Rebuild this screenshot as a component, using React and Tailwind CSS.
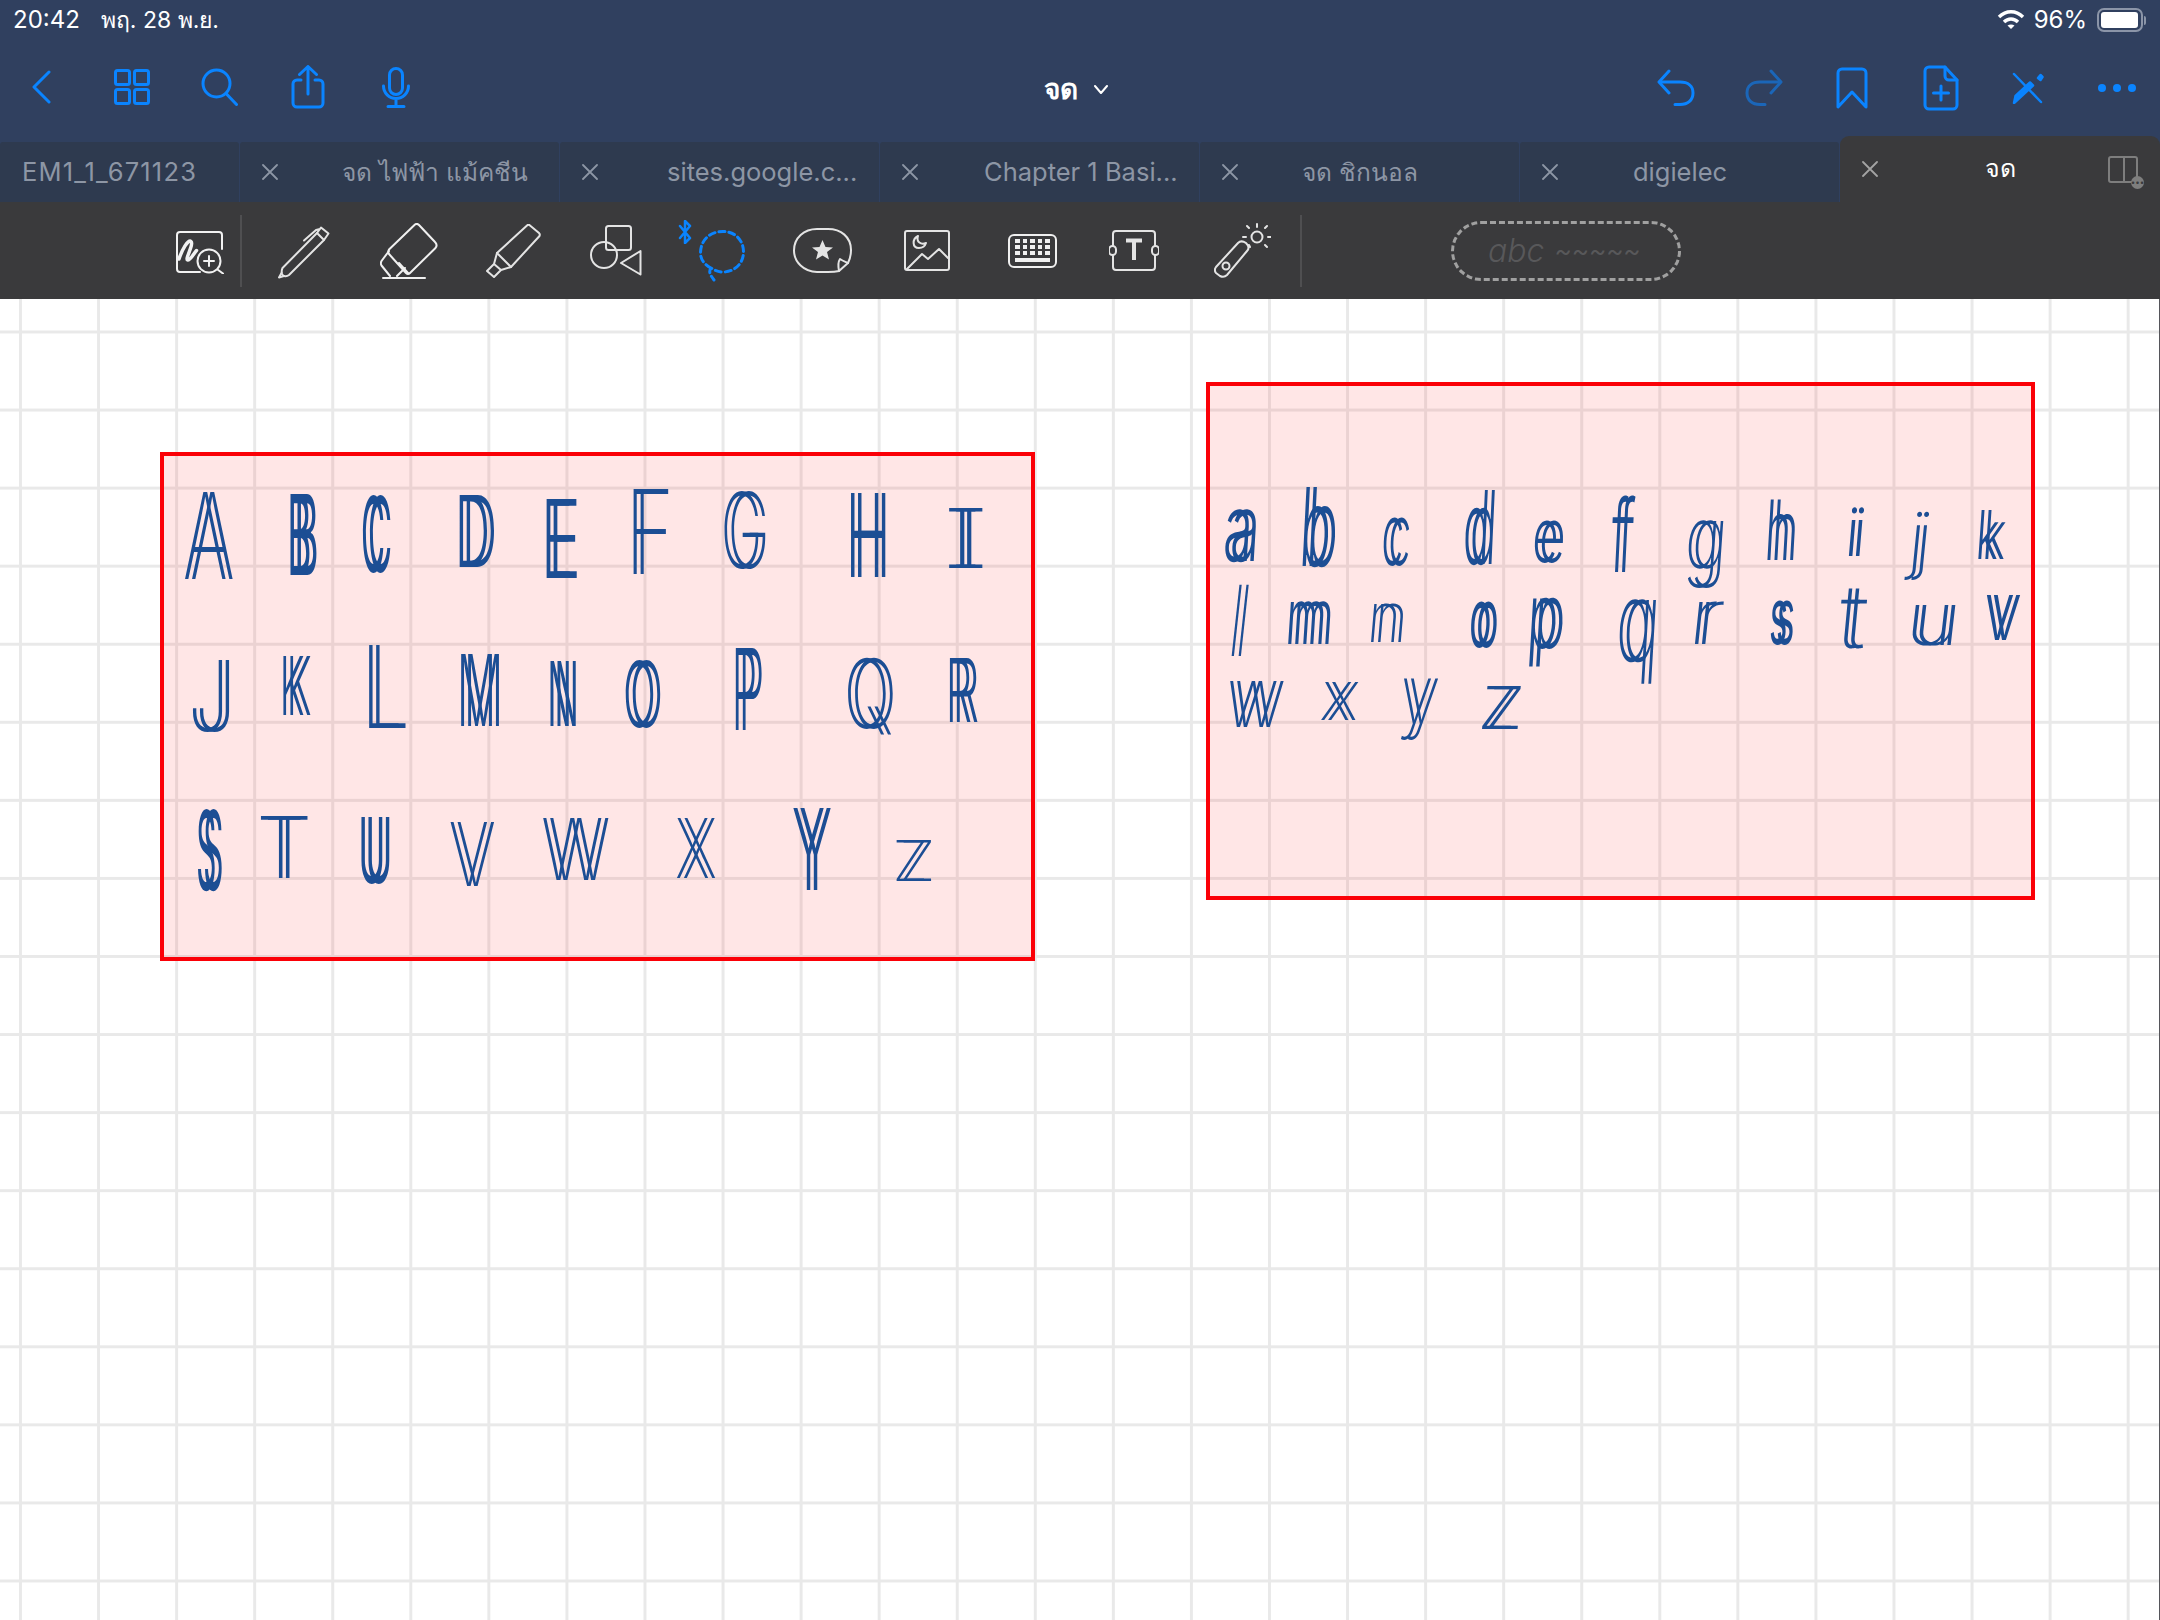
import { useLayoutEffect, useRef } from 'react';

const CANVAS_TOP = 299;
const PEN_WIDTH = 3.5;
const DOUBLE_STROKE = 7;

// [char, x0, x1, y0, y1] ink box of each handwritten letter on the page
const letters = [
  ['A', 182, 235, 492, 579], ['B', 287, 318, 494, 575], ['C', 361, 392, 496, 572], ['D', 455, 497, 496, 568],
  ['E', 541, 580, 500, 579], ['F', 626, 673, 490, 575], ['G', 720, 769, 492, 568], ['H', 846, 890, 494, 578],
  ['I', 942, 988, 508, 568], ['J', 187, 235, 660, 731], ['K', 279, 311, 656, 715], ['L', 361, 409, 646, 729],
  ['M', 457, 503, 655, 727], ['N', 547, 578, 661, 726], ['O', 622, 662, 661, 727], ['P', 731, 763, 648, 730],
  ['Q', 843, 896, 659, 740], ['R', 945, 978, 658, 722], ['S', 196, 223, 810, 890], ['T', 256, 312, 817, 879],
  ['U', 358, 392, 817, 883], ['V', 448, 496, 822, 886], ['W', 540, 610, 819, 881], ['X', 674, 717, 818, 878],
  ['Y', 792, 832, 808, 890], ['Z', 892, 935, 841, 882],
  ['a', 1224, 1260, 511, 562], ['b', 1300, 1338, 485, 567], ['c', 1382, 1411, 518, 565], ['d', 1463, 1496, 488, 565],
  ['e', 1532, 1565, 521, 562], ['f', 1611, 1634, 497, 573], ['g', 1685, 1727, 521, 588], ['h', 1765, 1798, 497, 560],
  ['i', 1846, 1865, 507, 557], ['j', 1909, 1932, 508, 581], ['k', 1976, 2006, 508, 559], ['l', 1224, 1255, 583, 657],
  ['m', 1286, 1334, 602, 644], ['n', 1367, 1407, 605, 643], ['o', 1469, 1498, 602, 647], ['p', 1527, 1565, 599, 668],
  ['q', 1616, 1660, 601, 686], ['r', 1690, 1725, 602, 644], ['s', 1769, 1794, 602, 645], ['t', 1838, 1868, 588, 648],
  ['u', 1906, 1960, 605, 645], ['v', 1983, 2020, 595, 640], ['w', 1226, 1285, 681, 727], ['x', 1320, 1359, 683, 721],
  ['y', 1400, 1439, 679, 741], ['z', 1478, 1525, 687, 730],
];

// share of the em box taken by the ink of a letter, and where the ink starts
const inkOf = (c) => {
  if ('gpqy'.includes(c)) return { size: 0.76, top: 0.318 };
  if ('j'.includes(c)) return { size: 1.0, top: 0.08 };
  if ('bdfhkl'.includes(c)) return { size: 0.756, top: 0.108 };
  if ('t'.includes(c)) return { size: 0.68, top: 0.18 };
  if ('i'.includes(c)) return { size: 0.76, top: 0.1 };
  if (c >= 'a' && c <= 'z') return { size: 0.546, top: 0.318 };
  if (c === 'Q') return { size: 0.85, top: 0.137 };
  return { size: 0.727, top: 0.137 };
};

function Letter({ char, x0, x1, y0, y1 }) {
  const ref = useRef(null);
  const ink = inkOf(char);
  const fontSize = (y1 - y0) / ink.size;
  const lower = char >= 'a' && char <= 'z';

  useLayoutEffect(() => {
    const el = ref.current;
    const room = Math.max(x1 - x0 - DOUBLE_STROKE, 10);
    const scale = Math.min(room / el.offsetWidth, 1.1);
    // same pen line and same gap between the two strokes, whatever the squeeze
    const weight = PEN_WIDTH / (fontSize * scale * 0.00025);
    el.style.fontWeight = Math.round(Math.min(400, Math.max(100, weight)));
    el.style.textShadow = `${DOUBLE_STROKE / scale}px 0 0 #1c4e94`;
    el.style.transform = `translateX(-3px) scaleX(${scale}) skewX(${lower ? -6 : 0}deg)`;
  }, [x0, x1, fontSize, lower]);

  return (
    <div
      className="absolute flex justify-center"
      style={{ left: x0, width: x1 - x0, top: y0 - CANVAS_TOP - ink.top * fontSize }}
    >
      <span
        ref={ref}
        className={`block leading-none font-light text-[#1c4e94] ${char === 'I' ? "[font-feature-settings:'cv08']" : ''}`}
        style={{ fontSize }}
      >
        {char}
      </span>
    </div>
  );
}

const Svg = ({ w, h, className = '', children, stroke = '#0a84ff', sw = 3 }) => (
  <svg
    width={w}
    height={h}
    viewBox={`0 0 ${w} ${h}`}
    fill="none"
    stroke={stroke}
    strokeWidth={sw}
    strokeLinecap="round"
    strokeLinejoin="round"
    className={`shrink-0 ${className}`}
  >
    {children}
  </svg>
);

const TOOL = '#e4e4e4';

const tabs = [
  { label: 'EM1_1_671123', noClose: true, size: 'w-[239px]', text: 'ml-[22px] tracking-[1.2px]' },
  { label: 'จด ไฟฟ้า แม้คชีน', size: 'w-[319px]', text: 'ml-[64px] text-[24.5px]' },
  { label: 'sites.google.c...', size: 'w-[319px]', text: 'ml-[69px]' },
  { label: 'Chapter 1 Basi...', size: 'w-[319px]', text: 'ml-[66px]' },
  { label: 'จด ชิกนอล', size: 'w-[319px]', text: 'ml-[64px] text-[24.5px]' },
  { label: 'digielec', size: 'w-[319px]', text: 'ml-[75px]' },
];

const CloseX = ({ color = '#8d96a5' }) => (
  <Svg w={16} h={16} stroke={color} sw={1.8} className="ml-[22px]">
    <path d="M1 1 L15 15 M15 1 L1 15" />
  </Svg>
);

function StatusBar() {
  return (
    <div className="flex h-[40px] items-center justify-between pl-[13px] pr-[14px] text-[24px] text-white">
      <div className="flex items-center">
        <span>20:42</span>
        <span className="ml-[21px] text-[23px]">พฤ. 28 พ.ย.</span>
      </div>
      <div className="flex items-center">
        <Svg w={28} h={20} stroke="#ffffff" sw={3.4} className="mr-[9px]">
          <path d="M2 7 C9 0 19 0 26 7" strokeLinecap="butt" />
          <path d="M7 12 C11 8 17 8 21 12" strokeLinecap="butt" />
          <path d="M14 19 L10.5 15.5 C12.5 14 15.5 14 17.5 15.5 Z" fill="#ffffff" stroke="none" />
        </Svg>
        <span>96%</span>
        <div className="ml-[10px] flex items-center">
          <div className="flex h-[24px] w-[46px] items-center rounded-[7px] border-2 border-[#8b95a8] p-[2px]">
            <div className="h-full w-[37px] rounded-[3px] bg-white" />
          </div>
          <div className="ml-[1px] h-[9px] w-[2px] rounded-r bg-[#8b95a8]" />
        </div>
      </div>
    </div>
  );
}

function NavBar() {
  return (
    <div className="flex h-[96px] items-start pt-[25px]">
      <div className="flex flex-1 items-center pl-[32px]">
        <Svg w={19} h={34}><path d="M17 2 L2 17 L17 32" /></Svg>
        <Svg w={36} h={36} className="ml-[63px]">
          <rect x="1.5" y="1.5" width="14" height="14" rx="2" />
          <rect x="20.5" y="1.5" width="14" height="14" rx="2" />
          <rect x="1.5" y="20.5" width="14" height="14" rx="2" />
          <rect x="20.5" y="20.5" width="14" height="14" rx="2" />
        </Svg>
        <Svg w={37} h={38} className="ml-[51px]">
          <circle cx="15.5" cy="15.5" r="13.5" />
          <path d="M25.5 26 L35.5 36.5" />
        </Svg>
        <Svg w={34} h={44} className="ml-[53px]">
          <path d="M10 15 H6 a4 4 0 0 0 -4 4 V38 a4 4 0 0 0 4 4 H28 a4 4 0 0 0 4 -4 V19 a4 4 0 0 0 -4 -4 H24" />
          <path d="M17 29 V2 M8.5 9.5 L17 1.5 L25.5 9.5" />
        </Svg>
        <Svg w={28} h={41} className="ml-[57px]">
          <rect x="7.5" y="1.5" width="13" height="26" rx="6.5" />
          <path d="M1.5 19 a12.5 12.5 0 0 0 25 0 M14 32 V39 M6 39.5 H22" />
        </Svg>
      </div>

      <div className="mt-[3px] mr-[16px] flex items-center text-[28px] font-semibold text-white">
        <span>จด</span>
        <Svg w={14} h={9} stroke="#ffffff" sw={2} className="ml-[16px]"><path d="M1 1 L7 8 L13 1" /></Svg>
      </div>

      <div className="flex flex-1 items-center justify-end pr-[24px]">
        <Svg w={38} h={38}>
          <path d="M12 2 L2 13 L12 24" />
          <path d="M3 13 H23 C31 13 36 17 36 24 C36 31 31 35.5 23 35.5 H18" />
        </Svg>
        <Svg w={38} h={38} stroke="#1b66b8" className="ml-[50px]">
          <path d="M26 2 L36 13 L26 24" />
          <path d="M35 13 H15 C7 13 2 17 2 24 C2 31 7 35.5 15 35.5 H20" />
        </Svg>
        <Svg w={32} h={42} className="ml-[53px]">
          <path d="M6 2 H26 a4 4 0 0 1 4 4 V40 L16 25 L2 40 V6 a4 4 0 0 1 4 -4 Z" />
        </Svg>
        <Svg w={36} h={46} className="ml-[55px]">
          <path d="M6 2 H22 L34 15 V40 a4 4 0 0 1 -4 4 H6 a4 4 0 0 1 -4 -4 V6 a4 4 0 0 1 4 -4 Z" />
          <path d="M22 2 V11 a4 4 0 0 0 4 4 H34 M18 21 V35 M10.5 28 H25.5" />
        </Svg>
        <Svg w={32} h={32} className="ml-[53px]" sw={2.5}>
          <path d="M2 2 L29 30" />
          <path d="M2 31 L3.5 24 L18 10.5 L21 13.5 Z" fill="#0a84ff" />
          <path d="M26 6 L28.5 3 L30.5 5 L28.5 8 Z" fill="#0a84ff" />
        </Svg>
        <div className="ml-[54px] flex items-center gap-[7px]">
          <div className="h-[8px] w-[8px] rounded-full bg-[#0a84ff]" />
          <div className="h-[8px] w-[8px] rounded-full bg-[#0a84ff]" />
          <div className="h-[8px] w-[8px] rounded-full bg-[#0a84ff]" />
        </div>
      </div>
    </div>
  );
}

function TabBar() {
  return (
    <div className="flex h-[66px] items-end">
      <div className="flex flex-1 gap-[1px]">
        {tabs.map((tab) => (
          <div
            key={tab.label}
            className={`flex h-[60px] items-center overflow-hidden rounded-t-[3px] bg-[#2e3a4f] text-[25.5px] text-[#8d96a5] ${tab.size}`}
          >
            {!tab.noClose && <CloseX />}
            <span className={`whitespace-nowrap ${tab.text}`}>{tab.label}</span>
          </div>
        ))}
      </div>
      <div className="flex h-[66px] w-[320px] items-center rounded-t-[9px] bg-[#3a3a3c]">
        <CloseX color="#a3a3a3" />
        <span className="ml-[107px] text-[25px] font-medium text-white">จด</span>
        <div className="relative ml-[92px] h-[27px] w-[30px] rounded-[3px] border-2 border-[#7e7e7e]">
          <div className="ml-[13px] h-full w-[2px] bg-[#7e7e7e]" />
          <div className="absolute right-[-8px] bottom-[-8px] flex h-[13px] w-[13px] items-center justify-center rounded-full bg-[#7e7e7e] text-[8px] leading-none text-[#3a3a3c]">
            •••
          </div>
        </div>
      </div>
    </div>
  );
}

function ToolBar() {
  return (
    <div className="flex h-[97px] items-center bg-[#3a3a3c] pl-[176px]">
      <Svg w={49} h={46} stroke="#f2f2f2" sw={2}>
        <path d="M24 44 H4 a3 3 0 0 1 -3 -3 V7 a3 3 0 0 1 3 -3 H43 a3 3 0 0 1 3 3 V21" />
        <path d="M3 31 C6 22 12 11 15 13.5 C18 16 9 31 11.5 32 C14 33 18 25 20.5 22.5" strokeWidth="3.5" />
        <circle cx="33" cy="33" r="11.5" />
        <path d="M33 28 V38 M28 33 H38 M41.5 41.5 L47 45.5" />
      </Svg>
      <div className="ml-[15px] h-[72px] w-[2px] bg-[#4f4f51]" />
      <Svg w={52} h={53} stroke={TOOL} sw={2} className="mt-[3px] ml-[36px]">
        <path d="M4.5 42 L39 7 L46 14 L11 49 C8.5 51 5 50.5 4 48 C3.5 46 3.5 44 4.5 42 Z" />
        <path d="M39 7 L43 1.5 L50.5 7.5 L46 14 M26 14.5 L38 4 L42 3" />
        <path d="M3.5 47 L1 51.5 L6 50" />
      </Svg>
      <Svg w={58} h={56} stroke="#f0f0f0" sw={2} className="ml-[50px]">
        <path d="M35 1.5 C36.5 0.5 38 1 39 2 L55 19 C57 21 57 23 55.5 25 L30 50 C28.5 51.5 27 51 26 50 L9 31 C8 29.5 8 28 9 26.5 Z" />
        <path d="M9 28 L1.5 38 C0.5 40 0.5 41 1.5 42.5 L10 53 M19 40 L28 50 M25 45 L17 53" />
        <path d="M3 55 H45" />
      </Svg>
      <Svg w={55} h={54} stroke={TOOL} sw={2} className="ml-[48px]">
        <path d="M41 1.5 C42 0.5 43 0.5 44 1.5 L53 9 C54 10 54 11 53.5 12 L25 43 L11 29 Z" />
        <path d="M11 29 L8 40 L1 47 L8 53 L15 46 L25 43 M8 40 L15 46" />
      </Svg>
      <Svg w={52} h={51} stroke={TOOL} sw={2} className="ml-[49px]">
        <rect x="16" y="1" width="25" height="24" rx="2.5" />
        <circle cx="14" cy="30" r="13" />
        <path d="M50.5 26 L31 38 L50.5 49.5 Z" />
      </Svg>
      <div className="ml-[36px] flex h-[61px] w-[66px] items-start">
        <Svg w={14} h={24} sw={2.5}><path d="M2 6 L12 18 L7 23 V1 L12 6 L2 18" /></Svg>
        <Svg w={46} h={52} sw={3} className="mt-[10px] ml-[7px]">
          <path d="M12 38 C4 34 1.5 28 1.5 23 C1.5 10 11 1.5 24 1.5 C36 1.5 44.5 10 44.5 22 C44.5 34 35 42 24 42 C19 42 15 40 12 38 C9 42 12 46 15 50" strokeDasharray="6 4" />
        </Svg>
      </div>
      <Svg w={59} h={45} stroke={TOOL} sw={2} className="ml-[49px]">
        <path d="M24 1 H35 C48 1 58 9 58 22 C58 28 57 31 55 35 L46 43 C42 44 38 44 35 44 H24 C11 44 1 34 1 22.5 C1 10 11 1 24 1 Z" />
        <path d="M46 43 C45 38 45 34 47 31 C50 33 53 34 55 35" />
        <path d="M29.5 12 L32.5 19 L40 19.5 L34 24 L36 31.5 L29.5 27.5 L23 31.5 L25 24 L19 19.5 L26.5 19 Z" fill="#e4e4e4" stroke="none" />
      </Svg>
      <Svg w={46} h={41} stroke={TOOL} sw={2} className="ml-[52px]">
        <rect x="1" y="1" width="44" height="39" rx="2" />
        <path d="M14 6 C8 9 8 18 15 18 C19 18 21 16 22 13 C17 15 12 12 14 6 Z" />
        <path d="M3 39 L18 24 L24 29 L35 19 L44 28" />
      </Svg>
      <div className="ml-[58px] grid h-[34px] w-[49px] shrink-0 grid-cols-5 content-center gap-x-[3px] gap-y-[2px] rounded-[6px] border-2 border-[#f0f0f0] px-[5px]">
        {Array.from({ length: 15 }).map((_, i) => (
          <div key={i} className="h-[4px] bg-[#f0f0f0]" />
        ))}
        <div className="col-span-5 mt-[1px] h-[4px] bg-[#f0f0f0]" />
      </div>
      <Svg w={50} h={41} stroke={TOOL} sw={2} className="ml-[52px]">
        <rect x="4" y="1" width="42" height="39" rx="3" />
        <rect x="0" y="16" width="7" height="9" rx="3.5" fill="#3a3a3c" />
        <rect x="43" y="16" width="7" height="9" rx="3.5" fill="#3a3a3c" />
        <path d="M17 10.5 H33 M25 10.5 V30" strokeWidth="4" strokeLinecap="butt" />
      </Svg>
      <Svg w={57} h={55} stroke={TOOL} sw={2} className="ml-[55px]">
        <path d="M2 44 L24 20 C26 18 29 18 32 20 C35 23 35 26 33 28 L13 52 C11 54 8 54 6 53 L2 50 C0.5 48 0.5 46 2 44 Z" />
        <circle cx="12" cy="43" r="3.5" />
        <circle cx="43" cy="14" r="5.5" />
        <path d="M43 1 V4 M54 14 H57 M32 14 H29 M51 5 L53 3 M35 5 L33 3 M51 22 L53 24 M35 22 L36 24" />
      </Svg>
      <div className="ml-[29px] h-[72px] w-[2px] bg-[#4f4f51]" />
      <div className="ml-[149px] flex h-[60px] w-[230px] shrink-0 items-center rounded-[30px] border-[3px] border-dashed border-[#a0a0a0] pl-[34px] text-[#58585a] italic">
        <span className="text-[32px] font-light">abc</span>
        <span className="ml-[10px] text-[26px]">~~~~~</span>
      </div>
    </div>
  );
}

function Canvas() {
  return (
    <div className="relative h-[1321px] overflow-hidden border-r border-[#55555a] bg-white bg-[linear-gradient(to_right,#e9e9e9_3px,transparent_3px),linear-gradient(to_bottom,#e9e9e9_3px,transparent_3px)] bg-[size:78.07px_78.07px] bg-[position:19px_31.5px]">
      <div className="absolute top-[153px] left-[160px] h-[509px] w-[875px] border-4 border-[#fb0007] bg-[#ff000019]" />
      <div className="absolute top-[83px] left-[1206px] h-[518px] w-[829px] border-4 border-[#fb0007] bg-[#ff000019]" />
      {letters.map(([char, x0, x1, y0, y1]) => (
        <Letter key={char} char={char} x0={x0} x1={x1} y0={y0} y1={y1} />
      ))}
    </div>
  );
}

export default function App() {
  return (
    <div className="h-[1620px] w-[2160px] overflow-hidden bg-white font-['Inter','Noto_Sans',sans-serif]">
      <div className="bg-[#30405f]">
        <StatusBar />
        <NavBar />
        <TabBar />
      </div>
      <ToolBar />
      <Canvas />
    </div>
  );
}
